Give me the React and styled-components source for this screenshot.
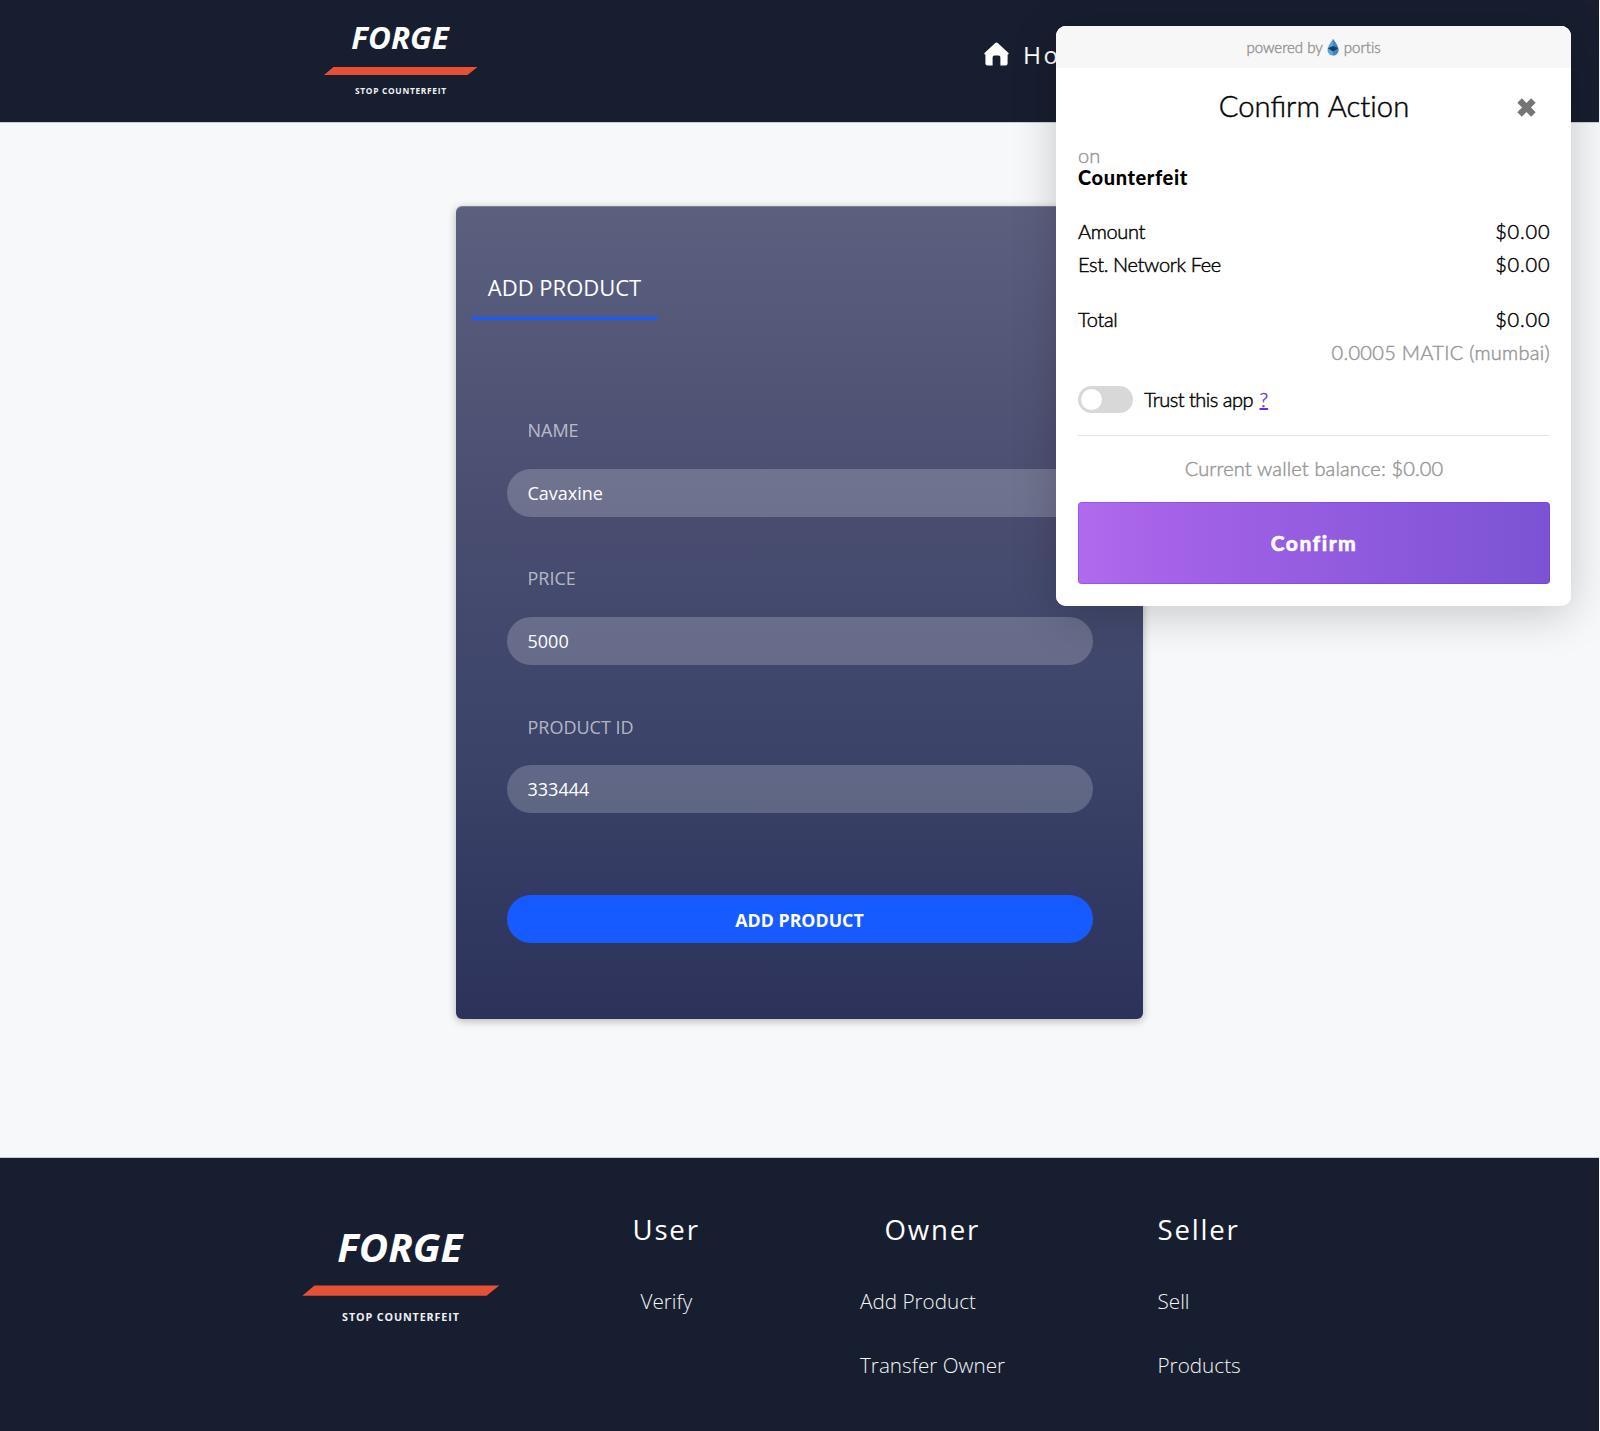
import React from 'react';
import styled, { createGlobalStyle } from 'styled-components';

const Global = createGlobalStyle`
  *, *::before, *::after { box-sizing: border-box; }
  body { margin: 0 1px 0 0; background: #f7f8fa; font-family: "Open Sans", sans-serif; }
`;

const Page = styled.div`
  display: flex;
  flex-direction: column;
  height: 1431px;
  overflow: hidden;
  background: #f7f8fa;
`;

const Header = styled.header`
  flex: none;
  height: 122px;
  display: flex;
  align-items: flex-start;
  padding-left: 323px;
  background: #171e2f;
  box-shadow: 0 0 1px #000;
`;

const HeaderLogo = styled.div`
  width: 155px;
  padding-top: 12px;
`;

const Nav = styled.nav`
  margin-left: 506px;
  padding-top: 41px;
`;

const NavLink = styled.a`
  display: flex;
  align-items: center;
  gap: 14px;
  height: 28px;
  color: #fff;
  font-size: 24.5px;
  line-height: 28px;
  letter-spacing: 2.4px;
  svg { display: block; margin-top: -3px; }
`;

const Main = styled.main`
  flex: none;
  height: 1036px;
  padding-top: 83.5px;
  display: flex;
  justify-content: center;
  align-items: flex-start;
`;

const Card = styled.section`
  width: 687px;
  height: 813px;
  display: flex;
  flex-direction: column;
  align-items: flex-start;
  padding: 68.5px 15px 0;
  border-radius: 6px;
  background: linear-gradient(180deg, #5b607f 0%, #484d70 40%, #3b4369 68%, #2c325a 100%);
  box-shadow: 0 2px 8px rgba(0, 0, 0, 0.28), inset 0 1px 0 rgba(255, 255, 255, 0.2);
`;

const Tab = styled.h2`
  margin: 0 0 98px;
  width: 187px;
  height: 46px;
  text-align: center;
  font-size: 22px;
  font-weight: 400;
  line-height: 26px;
  color: #fff;
  border-bottom: 3px solid #165bff;
  border-radius: 3px;
`;

const Form = styled.form`
  width: 100%;
  padding: 0 35.5px;
  display: flex;
  flex-direction: column;
  gap: 49.8px;
`;

const Label = styled.label`
  display: block;
  padding-left: 21px;
  font-size: 18px;
  line-height: 24px;
  color: rgba(255, 255, 255, 0.62);
`;

const Input = styled.input`
  display: block;
  width: 100%;
  height: 48px;
  margin-top: 26.5px;
  padding: 0 21px;
  border: 0;
  outline: 0;
  border-radius: 24px;
  background: rgba(255, 255, 255, 0.2);
  color: #fff;
  font: 400 18px "Open Sans", sans-serif;
`;

const Submit = styled.button`
  height: 48px;
  margin-top: 32px;
  padding: 2px 0 0;
  border: 0;
  border-radius: 24px;
  background: #165bff;
  color: #fff;
  font: 700 17.8px "Open Sans", sans-serif;
`;

const Footer = styled.footer`
  flex: 1;
  display: flex;
  align-items: flex-start;
  padding-left: 301px;
  background: #171e2f;
  box-shadow: 0 0 1px #000;
`;

const FooterLogo = styled.div`
  width: 199px;
  padding-top: 57px;
`;

const FooterColumn = styled.div`
  display: flex;
  flex-direction: column;
  padding-top: 53px;
  margin-left: ${(p) => p.$offset}px;
  width: ${(p) => p.$width}px;
`;

const FooterTitle = styled.h3`
  margin: 0 0 37px;
  padding-left: ${(p) => p.$indent || 0}px;
  font-size: 27.6px;
  font-weight: 400;
  line-height: 36px;
  letter-spacing: 1.8px;
  color: #fff;
`;

const FooterLink = styled.a`
  height: 63.5px;
  padding-left: ${(p) => p.$indent || 0}px;
  font-size: 20.7px;
  font-weight: 300;
  line-height: 34px;
  color: #f4f5f6;
`;

const Popup = styled.aside`
  position: absolute;
  left: 1056px;
  top: 26px;
  width: 515px;
  height: 580px;
  border-radius: 10px;
  overflow: hidden;
  background: #fff;
  color: #000;
  font: 300 20px/33px Lato, sans-serif;
  -webkit-text-stroke: 0.45px currentColor;
`;

const PopupShadow = styled(Popup)`
  overflow: visible;
  box-shadow: 0 8px 46px rgba(0, 0, 0, 0.2);
`;

const PoweredBy = styled.div`
  height: 42px;
  display: flex;
  align-items: center;
  justify-content: center;
  gap: 4.5px;
  background: #f7f7f7;
  color: #979797;
  font-size: 15px;
  font-variant-ligatures: none;
`;

const PopupBody = styled.div`
  padding: 0 21px 0 22px;
`;

const PopupHeader = styled.div`
  height: 77px;
  display: flex;
  align-items: center;
  padding-left: 33px;
`;

const PopupTitle = styled.h1`
  flex: 1;
  margin: 0;
  padding-bottom: 2px;
  text-align: center;
  font-size: 29.2px;
  font-weight: 300;
`;

const PlainWord = styled.span`
  font-variant-ligatures: none;
`;

const Close = styled.button`
  display: flex;
  margin: 2px 14px 0 0;
  padding: 0;
  border: 0;
  background: none;
`;

const SiteLabel = styled.div`
  height: 22px;
  line-height: 20px;
  color: #979797;
`;

const SiteName = styled.div`
  height: 21px;
  margin-bottom: 27px;
  line-height: 21px;
  font-weight: 900;
  letter-spacing: 0.6px;
  -webkit-text-stroke: 0;
`;

const Row = styled.div`
  display: flex;
  justify-content: space-between;
  height: 33px;
  margin-bottom: ${(p) => p.$gap || 0}px;
`;

const RowLabel = styled.span`
  letter-spacing: -0.35px;
`;

const Price = styled.span`
  letter-spacing: 0.8px;
  margin-right: -0.3px;
`;

const Crypto = styled.div`
  height: 33px;
  line-height: 32px;
  text-align: right;
  color: #979797;
  letter-spacing: 0.3px;
`;

const Trust = styled.div`
  display: flex;
  align-items: center;
  height: 27px;
  margin-top: 17px;
`;

const TrustLabel = styled.span`
  letter-spacing: -0.5px;
  margin-top: -1px;
`;

const Toggle = styled.span`
  width: 54.5px;
  height: 27px;
  margin-right: 11.5px;
  padding: 3px;
  border-radius: 14px;
  background: #d8d8d8;
  &::before {
    content: "";
    display: block;
    width: 21px;
    height: 21px;
    border-radius: 50%;
    background: #fff;
  }
`;

const Help = styled.a`
  margin: -1px 0 0 6.5px;
  color: #6b2fd6;
  text-decoration: underline;
`;

const Balance = styled.div`
  height: 66.5px;
  margin-top: 22px;
  border-top: 1px solid #e6e6e6;
  line-height: 65px;
  text-align: center;
  color: #979797;
  letter-spacing: 0.15px;
`;

const Confirm = styled.button`
  display: block;
  width: 100%;
  height: 82.5px;
  padding: 0;
  border: 1px solid rgba(120, 50, 215, 0.35);
  border-radius: 4px;
  background: linear-gradient(90deg, #b06aee 0%, #a462e8 20%, #7b53d3 100%) border-box;
  color: #fff;
  font: 900 21px Lato, sans-serif;
  letter-spacing: 1.5px;
`;

function Logo({ width }) {
  return (
    <svg width={width} viewBox="0 -10 155 95" display="block">
      <text x="28.3" y="26.8" fontFamily="Open Sans, sans-serif" fontSize="31" fontWeight="700" fontStyle="italic" fill="#fff" textLength="97.4" lengthAdjust="spacingAndGlyphs">FORGE</text>
      <polygon points="10.5,45 154.5,45 144.5,53 1,53" fill="#e65135" />
      <text x="32" y="72.2" fontFamily="Open Sans, sans-serif" fontSize="8.4" fontWeight="700" fill="#f1f1f4" textLength="91" lengthAdjust="spacing">STOP COUNTERFEIT</text>
    </svg>
  );
}

function HomeIcon() {
  return (
    <svg width="25" height="24" viewBox="0 0 25 24" fill="#fff">
      <path d="M11 1.2Q12.5 0 14 1.2L24.5 11Q25.2 12.6 23.6 12.6V21.4Q23.6 23.4 21.5 23.4H16.4V15.6Q16.4 13.6 14.6 13.6H10.4Q8.6 13.6 8.6 15.6V23.4H3.5Q1.4 23.4 1.4 21.4V12.6Q-.2 12.6 .5 11Z" />
    </svg>
  );
}

function Drop() {
  return (
    <svg width="12" height="17" viewBox="0 0 12 17">
      <path d="M6 0Q11.5 7 11.5 11A5.5 5.5 0 0 1 .5 11Q.5 7 6 0Z" fill="#5fa3d6" />
      <path d="M6 0Q11.5 7 11.5 11A5.5 5.5 0 0 1 6 16.5Z" fill="#4384bb" />
      <path d="M.8 9.2L6 7L11.2 9.2L6 12.6Z" fill="#1d3c61" />
    </svg>
  );
}

const fields = [
  ['NAME', 'Cavaxine'],
  ['PRICE', '5000'],
  ['PRODUCT ID', '333444'],
];

export default function App() {
  return (
    <Page>
      <Global />
      <Header>
        <HeaderLogo><Logo width={155} /></HeaderLogo>
        <Nav>
          <NavLink><HomeIcon />Home</NavLink>
        </Nav>
      </Header>
      <Main>
        <Card>
          <Tab>ADD PRODUCT</Tab>
          <Form>
            {fields.map(([label, value]) => (
              <div key={label}>
                <Label>{label}</Label>
                <Input defaultValue={value} />
              </div>
            ))}
            <Submit type="button">ADD PRODUCT</Submit>
          </Form>
        </Card>
      </Main>
      <Footer>
        <FooterLogo><Logo width={199} /></FooterLogo>
        <FooterColumn $offset={132.5} $width={120}>
          <FooterTitle>User</FooterTitle>
          <FooterLink $indent={8}>Verify</FooterLink>
        </FooterColumn>
        <FooterColumn $offset={107.5} $width={180}>
          <FooterTitle $indent={24.5}>Owner</FooterTitle>
          <FooterLink>Add Product</FooterLink>
          <FooterLink>Transfer Owner</FooterLink>
        </FooterColumn>
        <FooterColumn $offset={117.5} $width={140}>
          <FooterTitle>Seller</FooterTitle>
          <FooterLink>Sell</FooterLink>
          <FooterLink>Products</FooterLink>
        </FooterColumn>
      </Footer>
      <PopupShadow />
      <Popup>
        <PoweredBy><span>powered by</span><Drop /><span>portis</span></PoweredBy>
        <PopupBody>
          <PopupHeader>
            <PopupTitle>Confirm <PlainWord>Action</PlainWord></PopupTitle>
            <Close aria-label="Close">
              <svg width="19" height="19" viewBox="0 0 19 19" stroke="#757575" strokeWidth="6.4"><path d="M2.6 2.6L16.4 16.4M16.4 2.6L2.6 16.4" /></svg>
            </Close>
          </PopupHeader>
          <SiteLabel>on</SiteLabel>
          <SiteName>Counterfeit</SiteName>
          <Row><RowLabel>Amount</RowLabel><Price>$0.00</Price></Row>
          <Row $gap={22}><RowLabel>Est. Network Fee</RowLabel><Price>$0.00</Price></Row>
          <Row><RowLabel>Total</RowLabel><Price>$0.00</Price></Row>
          <Crypto>0.0005 MATIC (mumbai)</Crypto>
          <Trust><Toggle /><TrustLabel>Trust this app</TrustLabel><Help>?</Help></Trust>
          <Balance>Current wallet balance: $0.00</Balance>
          <Confirm>Confirm</Confirm>
        </PopupBody>
      </Popup>
    </Page>
  );
}
